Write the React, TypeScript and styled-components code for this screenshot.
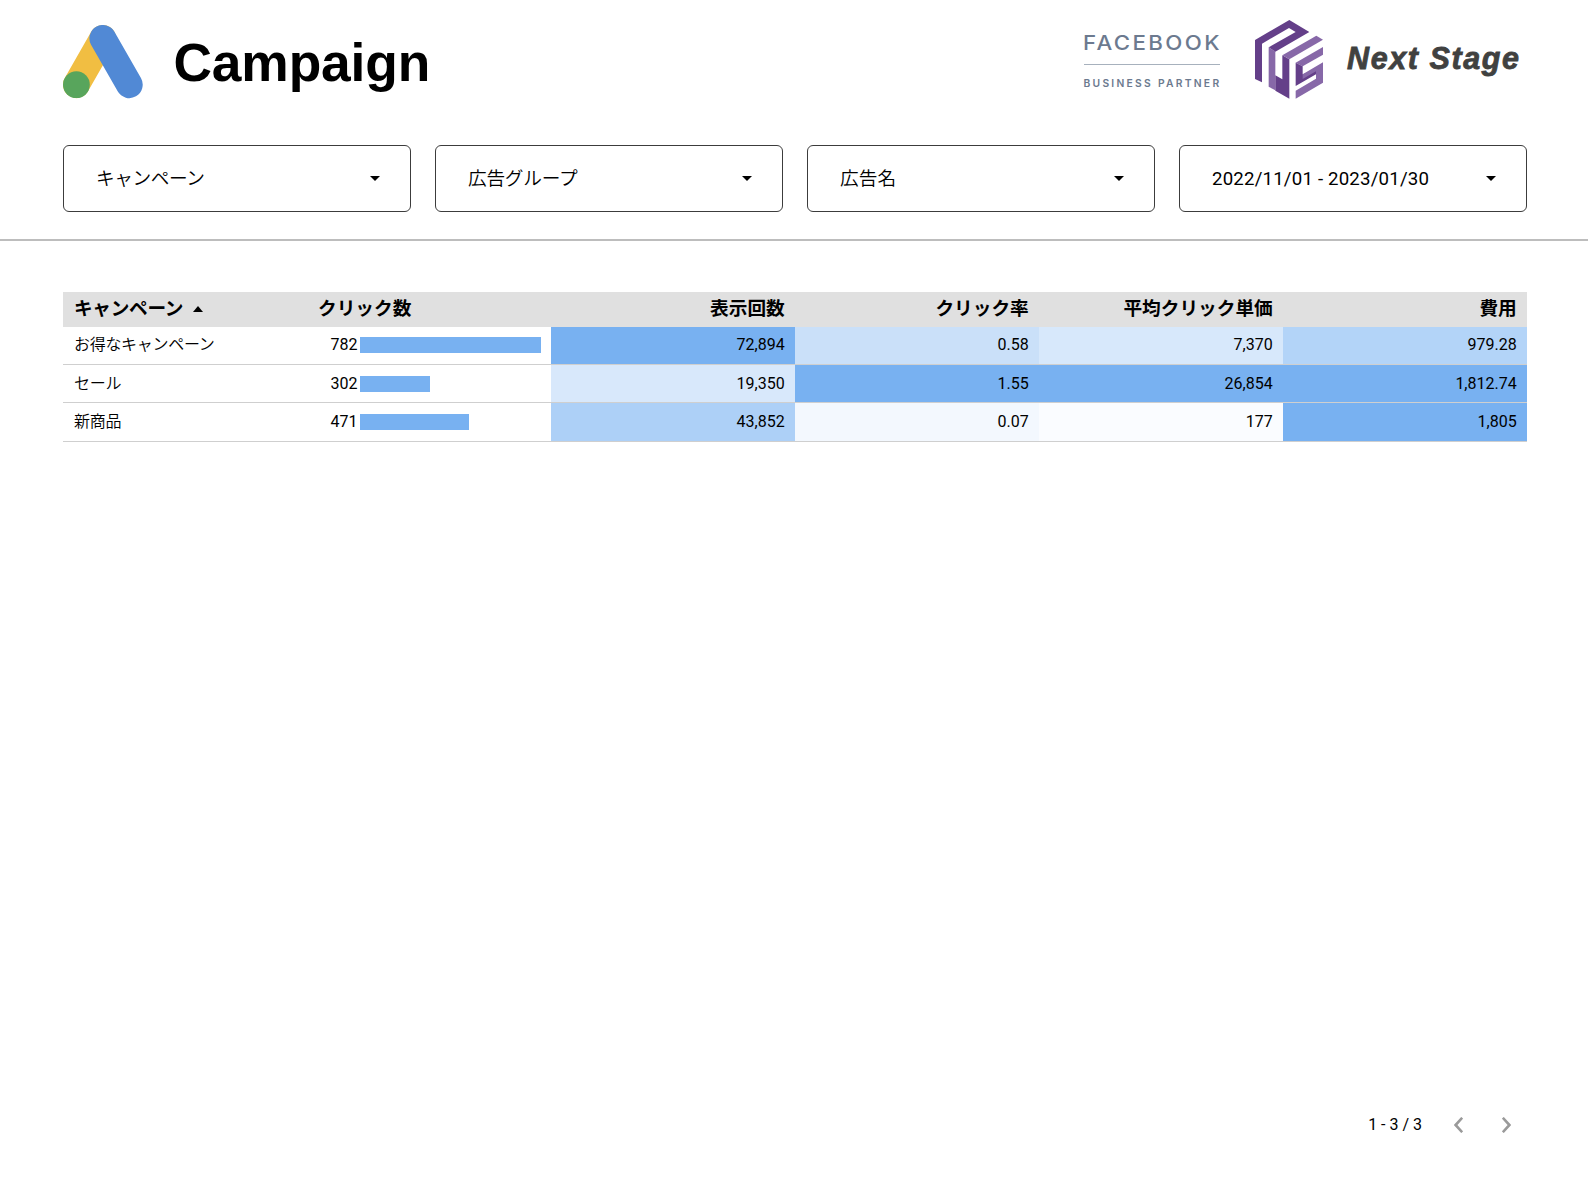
import React from "react";
import styled, { createGlobalStyle } from "styled-components";

const GlobalStyle = createGlobalStyle`
  *, *::before, *::after { box-sizing: border-box; }
  body {
    margin: 0;
    background: #fff;
    color: #000;
    font-family: Roboto, "Noto Sans CJK JP", sans-serif;
  }
`;

const Page = styled.main`
  width: 1588px;
  height: 1184px;
  overflow: hidden;
  display: flex;
  flex-direction: column;
`;

const Header = styled.header`
  height: 145px;
  padding: 0 61px 0 63px;
  display: flex;
  align-items: flex-start;
`;

const AdsLogo = styled.svg`
  width: 80px;
  height: 74px;
  margin-top: 25px;
  flex: none;
`;

const Title = styled.h1`
  margin: 32px auto 0 30.5px;
  font: 700 53.33px/61px "Liberation Sans", Arial, sans-serif;
  letter-spacing: -0.15px;
`;

const Partner = styled.div`
  width: 136px;
  margin-top: 31px;
  display: flex;
  flex-direction: column;
  color: #6c7a8f;
  font-family: Inter, sans-serif;
  white-space: nowrap;
`;

const PartnerName = styled.div`
  font-size: 20px;
  font-weight: 500;
  line-height: 24px;
  letter-spacing: 2.15px;
  margin-left: -1.5px;
  transform: scaleX(1.112);
  transform-origin: left center;
`;

const PartnerRule = styled.div`
  height: 1px;
  margin-top: 9px;
  background: #a7b1bd;
`;

const PartnerRole = styled.div`
  margin: 12px 0 0 -0.5px;
  font-size: 10.3px;
  font-weight: 600;
  line-height: 13px;
  letter-spacing: 2.27px;
`;

const StageLogo = styled.svg`
  width: 100px;
  height: 100px;
  margin: 10px 0 0 20px;
  flex: none;
`;

const StageName = styled.div`
  margin: 41px 0 0 7px;
  width: 180px;
  color: #404140;
  font: italic 700 30.5px/34px "Liberation Sans", Arial, sans-serif;
  letter-spacing: 1.6px;
  -webkit-text-stroke: 0.8px #404140;
  white-space: nowrap;
`;

const Filters = styled.section`
  display: grid;
  grid-template-columns: repeat(4, 348px);
  gap: 24px;
  padding: 0 63px;
`;

const Filter = styled.button`
  height: 67px;
  padding: 0 30px 0 32px;
  display: flex;
  align-items: center;
  justify-content: space-between;
  border: 1px solid #3c3c3c;
  border-radius: 6px;
  background: #fff;
  color: #000;
  font: 400 18.67px/24px Roboto, "Noto Sans CJK JP", sans-serif;
`;

const FilterLabel = styled.span<{ $spacing?: number; $light?: boolean }>`
  letter-spacing: ${(p) => p.$spacing ?? 0}px;
  font-weight: ${(p) => (p.$light ? 350 : 400)};
`;

const Caret = styled.span`
  width: 0;
  height: 0;
  border: 5px solid transparent;
  border-top-color: #000;
  border-bottom: 0;
`;

const SortCaret = styled.span`
  width: 0;
  height: 0;
  margin: 5px 0 0;
  border: 5px solid transparent;
  border-bottom: 6px solid #000;
  border-top: 0;
`;

const Divider = styled.hr`
  width: 100%;
  height: 2px;
  margin: 27px 0 51px;
  border: 0;
  background: #bdbdbd;
  flex: none;
`;

const Table = styled.div`
  width: 1464px;
  margin-left: 63px;
`;

const Row = styled.div<{ $height: number }>`
  display: grid;
  grid-template-columns: repeat(6, 244px);
  height: ${(p) => p.$height}px;
  border-bottom: 1px solid #cfcfcf;
`;

const HeadRow = styled(Row)`
  background: #e0e0e0;
  border-bottom: 0;
  font-size: 18.67px;
  font-weight: 700;
`;

const HeadCell = styled.div<{ $left?: boolean; $spacing?: number }>`
  display: flex;
  align-items: center;
  justify-content: ${(p) => (p.$left ? "flex-start" : "flex-end")};
  gap: 10px;
  padding: 0 10.3px 6px 11px;
  letter-spacing: ${(p) => p.$spacing ?? 0}px;
`;

const Cell = styled.div<{ $fill?: string; $lift: number }>`
  display: flex;
  align-items: center;
  justify-content: flex-end;
  padding: 0 10.3px ${(p) => p.$lift}px;
  background: ${(p) => p.$fill ?? "transparent"};
  font-size: 16px;
`;

const NameCell = styled(Cell)`
  justify-content: flex-start;
  padding: 0 0 ${(p) => p.$lift + 3}px 11px;
  letter-spacing: -0.3px;
  font-weight: 350;
`;

const ClickCell = styled(Cell)`
  justify-content: flex-start;
  padding-left: 23.5px;
`;

const ClickValue = styled.span`
  width: 29.5px;
`;

const Bar = styled.span<{ $top: number }>`
  align-self: flex-start;
  height: 16px;
  margin-top: ${(p) => p.$top}px;
  background: #78b1f1;
`;

const Pager = styled.footer`
  margin-top: auto;
  height: 118px;
  padding: 0 77px 0 0;
  display: flex;
  align-items: center;
  justify-content: flex-end;
  font-size: 16px;
`;

const PageRange = styled.span`
  margin: 0 32px 2px 0;
`;

const Chevron = styled.svg`
  width: 9px;
  height: 16px;
  fill: none;
  stroke: #9a9a9a;
  stroke-width: 2.6;
  & + & { margin-left: 39px; }
`;

const filters = [
  { label: "キャンペーン", spacing: -0.4, light: true },
  { label: "広告グループ", spacing: -0.25, light: true },
  { label: "広告名", spacing: 0.1, light: true },
  { label: "2022/11/01 - 2023/01/30", spacing: 0.18 },
];

const metrics = ["表示回数", "クリック率", "平均クリック単価", "費用"];

const rows = [
  {
    name: "お得なキャンペーン", clicks: 782, height: 38, lift: 2, barTop: 10,
    cells: [["72,894", "#78b1f1"], ["0.58", "#cae0f9"], ["7,370", "#d7e8fb"], ["979.28", "#b3d4f8"]],
  },
  {
    name: "セール", clicks: 302, height: 38, lift: 0, barTop: 11,
    cells: [["19,350", "#d8e8fb"], ["1.55", "#78b1f1"], ["26,854", "#78b1f1"], ["1,812.74", "#78b1f1"]],
  },
  {
    name: "新商品", clicks: 471, height: 39, lift: 2, barTop: 11,
    cells: [["43,852", "#add0f7"], ["0.07", "#f3f8fe"], ["177", "#fafcff"], ["1,805", "#78b1f1"]],
  },
];

const maxClicks = 782;

export default function App() {
  return (
    <>
      <GlobalStyle />
      <Page>
        <Header>
          <AdsLogo viewBox="0 0 80 74">
            <path d="M13.4 59.7 39.8 13.4" stroke="#f1be42" strokeWidth="26.8" strokeLinecap="round" />
            <path d="M39.8 13.4 66.3 59.7" stroke="#5189d5" strokeWidth="26.8" strokeLinecap="round" />
            <circle cx="13.4" cy="59.7" r="13.4" fill="#58a55c" />
          </AdsLogo>
          <Title>Campaign</Title>
          <Partner>
            <PartnerName>FACEBOOK</PartnerName>
            <PartnerRule />
            <PartnerRole>BUSINESS PARTNER</PartnerRole>
          </Partner>
          <StageLogo viewBox="0 0 300 300">
            <path fill="#643f89" d="M45 90 148 30 208 66 106 125 86 112 167 66 147 54 66 101 66 217 45 207Z" />
            <path fill="#8768a8" d="M86 112 106 124 106 241 86 230Z" />
            <path fill="#643f89" d="M106 196 127 208 127 136 148 148 148 266 106 242Z" />
            <path fill="#8768a8" d="M127 136 229 77 249 89 148 148Z" />
            <path fill="#8768a8" d="M167 158 249 111 249 134 188 169Z" />
            <path fill="#643f89" d="M167 158 188 169 188 193 228 181 228 193 167 228Z" />
            <path fill="#8768a8" d="M188 193 249 157 249 218 167 266 167 242 228 206 228 184 188 207Z" />
          </StageLogo>
          <StageName>Next Stage</StageName>
        </Header>
        <Filters>
          {filters.map((f) => (
            <Filter key={f.label}>
              <FilterLabel $spacing={f.spacing} $light={f.light}>{f.label}</FilterLabel>
              <Caret />
            </Filter>
          ))}
        </Filters>
        <Divider />
        <Table>
          <HeadRow $height={35}>
            <HeadCell $left $spacing={-0.3}>キャンペーン<SortCaret /></HeadCell>
            <HeadCell $left>クリック数</HeadCell>
            {metrics.map((m) => <HeadCell key={m}>{m}</HeadCell>)}
          </HeadRow>
          {rows.map((r) => (
            <Row key={r.name} $height={r.height}>
              <NameCell $lift={r.lift}>{r.name}</NameCell>
              <ClickCell $lift={r.lift}>
                <ClickValue>{r.clicks}</ClickValue>
                <Bar $top={r.barTop} style={{ width: Math.round((r.clicks / maxClicks) * 181) }} />
              </ClickCell>
              {r.cells.map(([value, fill]) => <Cell key={value} $fill={fill} $lift={r.lift}>{value}</Cell>)}
            </Row>
          ))}
        </Table>
        <Pager>
          <PageRange>1 - 3 / 3</PageRange>
          <Chevron viewBox="0 0 9 16"><path d="M8.2 .8 1.6 8l6.6 7.2" /></Chevron>
          <Chevron viewBox="0 0 9 16"><path d="M.8 .8 7.4 8 .8 15.2" /></Chevron>
        </Pager>
      </Page>
    </>
  );
}
